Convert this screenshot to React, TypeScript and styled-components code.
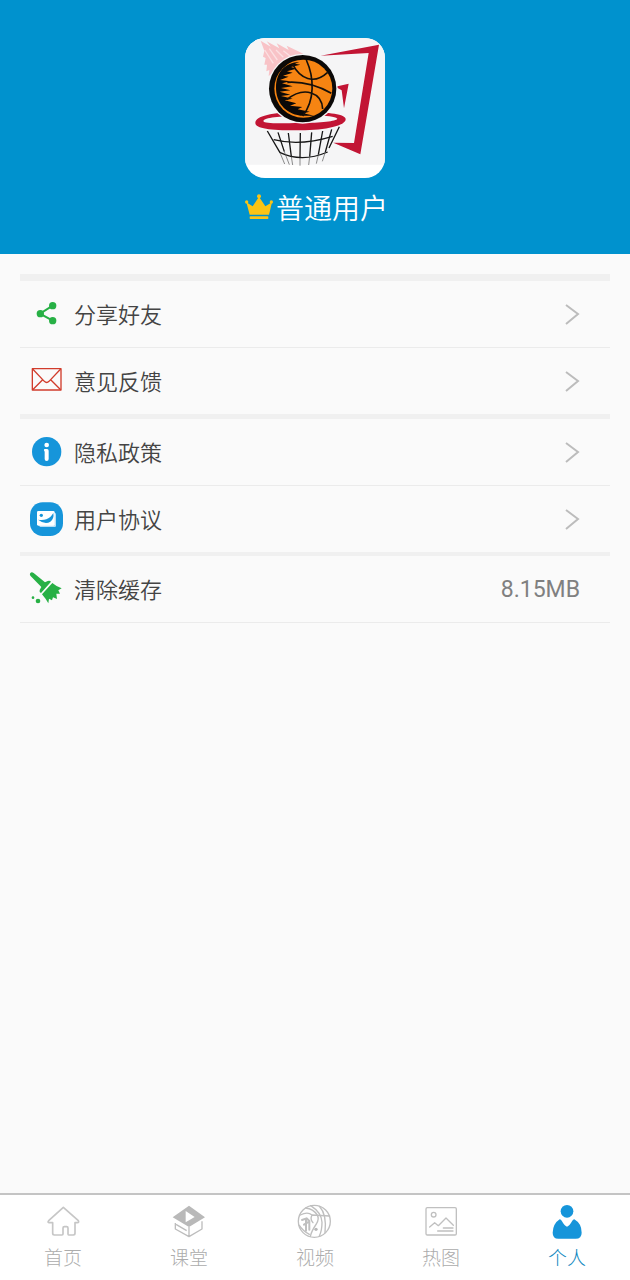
import React from 'react';
import styled, { createGlobalStyle } from 'styled-components';

const GlobalStyle = createGlobalStyle`
  * { box-sizing: border-box; }
  body {
    margin: 0;
    background: #fafafa;
    font-family: Roboto, 'Noto Sans CJK SC', sans-serif;
  }
  button { font-family: inherit; }
`;

const Page = styled.div`
  display: flex;
  flex-direction: column;
  min-height: 100vh;
`;

const Header = styled.header`
  display: flex;
  flex-direction: column;
  align-items: center;
  gap: 12px;
  padding: 38px 20px 24px;
  background: #0092ce;
`;

const Logo = styled.svg`
  width: 140px;
  height: 140px;
  border-radius: 20px;
  background: #ffffff;
`;

const UserName = styled.h1`
  display: flex;
  align-items: flex-start;
  gap: 3px;
  margin: 0;
  padding-left: 3px;
  color: #ffffff;
  font-size: 28px;
  font-weight: 350;
  line-height: 40px;
`;

const Crown = styled.svg`
  width: 28px;
  height: 32px;
`;

const Main = styled.main`
  flex: 1;
  padding: 20px;
`;

const Menu = styled.ul`
  margin: 0;
  padding: 0;
  list-style: none;
  border-top: 7px solid #f0f0f0;
`;

const MenuItem = styled.li<{ $divider: number }>`
  border-bottom: ${(p) => p.$divider}px solid ${(p) => (p.$divider > 1 ? '#f0f0f0' : '#ebebeb')};
`;

const MenuButton = styled.button`
  display: flex;
  align-items: center;
  gap: 10px;
  width: 100%;
  height: 66px;
  padding: 0 30px 0 8px;
  border: 0;
  background: none;
  color: #444444;
  font-size: 22px;
  font-weight: 350;
  line-height: 32px;
  text-align: left;
  cursor: pointer;
`;

const MenuLabel = styled.span`
  flex: 1;
  padding-top: 3px;
`;

const MenuValue = styled.span`
  padding-top: 2px;
  color: #808080;
  font-size: 23px;
  font-weight: 400;
`;

const Icon = styled.svg`
  flex: none;
  width: 36px;
  height: 36px;
`;

const Chevron = styled.svg`
  width: 16px;
  height: 24px;
`;

const TabBar = styled.nav`
  position: sticky;
  bottom: 0;
  display: flex;
  border-top: 2px solid #c4c4c4;
  background: #ffffff;
`;

const Tab = styled.button<{ $active: boolean }>`
  display: flex;
  flex: 1;
  flex-direction: column;
  align-items: center;
  gap: 5px;
  padding: 9px 0 7px;
  border: 0;
  background: none;
  color: ${(p) => (p.$active ? '#1088c0' : '#acacac')};
  font-size: 19px;
  font-weight: 300;
  line-height: 28px;
  cursor: pointer;
`;

const ShareIcon = () => (
  <Icon viewBox="54 93 108 108" aria-hidden="true">
    <path d="M128 122 L90 146 L128 167" fill="none" stroke="#27b045" strokeWidth="6" />
    <circle cx="128" cy="122" r="11" fill="#27b045" />
    <circle cx="91" cy="146" r="11" fill="#27b045" />
    <circle cx="128" cy="167" r="11" fill="#27b045" />
  </Icon>
);

const MailIcon = () => (
  <Icon viewBox="54 294 108 108" aria-hidden="true">
    <g fill="none" stroke="#d13c2c" strokeWidth="4" strokeLinejoin="round">
      <rect x="67" y="311" width="86" height="64" />
      <path d="M68 312 L103 349 Q110 356 117 349 L152 312 M68 374 L98 344 M152 374 L122 344" />
    </g>
  </Icon>
);

const InfoIcon = () => (
  <Icon viewBox="54 72 108 108" aria-hidden="true">
    <circle cx="110" cy="125" r="44" fill="#1695da" />
    <circle cx="110" cy="105" r="7" fill="#fff" />
    <path d="M103 117 H111 Q116 117 116 122 V147 Q116 153 110 153 Q104 153 104 147 V125 Q100 121 103 117Z" fill="#fff" />
  </Icon>
);

const AgreementIcon = () => (
  <Icon viewBox="54 273 108 108" aria-hidden="true">
    <rect x="60" y="277" width="99" height="101" rx="38" fill="#1695da" />
    <rect x="88" y="309" width="50" height="42" rx="4" fill="#b9def5" />
    <rect x="81" y="303" width="53" height="44" rx="4" fill="#fff" />
    <circle cx="94" cy="316" r="5" fill="#1695da" />
    <path d="M84 329 Q98 331 109 328 Q122 323 130 309 Q133 326 121 335 Q105 345 84 329Z" fill="#1695da" />
  </Icon>
);

const BroomIcon = () => (
  <Icon viewBox="54 483 108 108" aria-hidden="true">
    <g fill="#27b045">
      <path d="M61 489 Q65 484 71 489 L105 517 L113 513 Q119 510 123 515 L93 549 Q87 547 89 540 L94 531 L61 497 Q58 493 61 489Z" />
      <path d="M127 519 Q140 530 155 535 L145 541 L150 551 L139 551 L141 567 L129 562 L126 571 L117 566 L115 580 Q108 567 96 553Z" />
      <circle cx="84" cy="573" r="7" />
      <circle cx="69" cy="563" r="4" />
    </g>
  </Icon>
);

const HomeIcon = () => (
  <Icon viewBox="135 57 108 108" aria-hidden="true">
    <path
      d="M190 67 L235 107 Q238 113 232 113 H225 V145 Q225 150 220 150 H206 Q204 150 204 147 V129 Q204 125 200 125 H193 Q189 125 189 129 V147 Q189 150 186 150 H163 Q158 150 158 145 V113 H147 Q142 112 146 107Z"
      fill="none"
      stroke="#c6c6c6"
      strokeWidth="5"
      strokeLinejoin="round"
    />
  </Icon>
);

const ClassIcon = () => (
  <Icon viewBox="513 57 108 108" aria-hidden="true">
    <path d="M567 62 L615 97 L567 126 L518 97Z M557 78 V112 L584 96Z" fill="#b9b9b9" fillRule="evenodd" />
    <path
      d="M606 109 V132 L567 155 V126 M567 155 L526 132 V114 M528 118 L560 137"
      fill="none"
      stroke="#bdbdbd"
      strokeWidth="4"
      strokeLinejoin="round"
    />
  </Icon>
);

const VideoIcon = () => (
  <Icon viewBox="51 57 108 108" aria-hidden="true">
    <g fill="none" stroke="#bfbfbf" strokeWidth="4" strokeLinecap="round">
      <circle cx="103" cy="109" r="48" />
      <path d="M77 69 Q100 72 111 89 Q119 101 109 117 Q94 139 91 154" />
      <path d="M92 62 Q125 83 126 112 Q126 137 118 153 M118 64 Q141 88 135 143" />
      <path d="M61 90 Q83 79 96 90 Q122 91 149 93 M96 90 Q89 103 99 113 M58 121 Q68 137 88 148" />
      <path d="M66 105 L80 100 L88 108 L88 134 M78 104 L78 137 M72 119 L83 112" strokeWidth="6" />
    </g>
    <circle cx="108" cy="133" r="5" fill="#b8b8b8" />
  </Icon>
);

const PictureIcon = () => (
  <Icon viewBox="429 57 108 108" aria-hidden="true">
    <g fill="none" stroke="#c0c0c0" strokeWidth="4" strokeLinejoin="round" strokeLinecap="round">
      <rect x="438" y="68" width="91" height="82" rx="4" />
      <circle cx="461" cy="89" r="7" />
      <path d="M449 126 L464 113 L475 122 L498 99 L520 121 M490 129 H519 M473 138 H519" />
    </g>
  </Icon>
);

const PersonIcon = () => (
  <Icon viewBox="87 57 108 108" aria-hidden="true">
    <g fill="#1695da">
      <circle cx="141" cy="79" r="19" />
      <path d="M119 103 Q123 103 126 109 Q134 124 141 125 Q148 124 156 109 Q159 103 163 103 Q185 116 185 143 Q185 161 167 161 H115 Q98 161 98 143 Q99 116 119 103Z" />
    </g>
  </Icon>
);

const AppLogo = () => (
  <Logo viewBox="15 24 420 420" role="img" aria-label="篮球">
    <path d="M15 24 H435 V404 H15Z" fill="#f5f5f6" />
    <path
      d="M62 32 L92 50 L80 34 L118 55 L110 40 L146 60 L140 47 L190 71 L138 89 L105 124 L86 138 L88 120 L79 124 L81 104 L73 104 L77 84 L69 80 L73 62Z"
      fill="#f8c3c7"
    />
    <path d="M74 60 L100 100 M88 56 L112 90 M108 60 L130 82 M130 62 L150 78" fill="none" stroke="#fbe0e2" strokeWidth="4" />
    <path d="M242 77 L417 44 L361 373 L280 338 L342 339 L386 69Z" fill="#c21534" />
    <path d="M286 170 L326 161 L312 235 L305 181Z" fill="#c21534" />
    <path
      d="M46 279 C46 257 104 246 181 247 C258 246 317 251 317 268 C317 287 259 301 181 301 C103 302 46 297 46 279Z M70 273 C73 282 120 280 181 279 C243 278 289 274 292 266 C281 256 235 257 181 258 C119 258 73 263 70 273Z"
      fill="#c21534"
      fillRule="evenodd"
    />
    <circle cx="188" cy="176" r="105" fill="#f5f5f6" />
    <circle cx="188" cy="176" r="101" fill="#0b0908" />
    <circle cx="190" cy="176" r="87" fill="#f68412" />
    <path
      d="M178 96 C135 97 109 127 108 171 C107 216 135 250 181 257 L222 257 L190 250 L209 245 L173 238 L187 231 L150 227 L169 220 L134 211 L158 206 L123 198 L151 194 L119 185 L151 181 L123 174 L158 169 L126 160 L151 154 L120 150 L146 140 L129 137 L158 128 L141 124 L169 116 L153 111 L181 104 L165 101Z"
      fill="#0b0908"
    />
    <g fill="none" stroke="#15100b" strokeWidth="5">
      <path d="M199 90 C223 143 225 211 188 258" />
      <path d="M157 101 C180 147 222 165 263 127" />
      <path d="M142 157 Q209 153 274 190" />
      <path d="M140 209 C194 166 246 189 248 237" />
    </g>
    <g fill="none" stroke="#171717" strokeWidth="4">
      <path d="M82 303 L120 368 M114 307 L133 365 M145 309 L154 380 M181 309 L180 385 M215 307 L209 380 M248 303 L235 374 M275 298 L256 366 M298 290 L267 354" />
      <path d="M101 329 Q180 349 278 319 M119 367 Q185 399 263 366" />
    </g>
    <path
      d="M120 368 L134 402 M133 365 L148 404 M154 380 L158 405 M180 385 L180 407 M209 380 L206 405 M235 374 L229 401 M256 366 L247 394"
      fill="none"
      stroke="#555555"
      strokeWidth="2"
    />
  </Logo>
);

const menuItems = [
  { label: '分享好友', icon: ShareIcon, divider: 1 },
  { label: '意见反馈', icon: MailIcon, divider: 5 },
  { label: '隐私政策', icon: InfoIcon, divider: 1 },
  { label: '用户协议', icon: AgreementIcon, divider: 4 },
  { label: '清除缓存', icon: BroomIcon, divider: 1, value: '8.15MB' },
];

const tabs = [
  { label: '首页', icon: HomeIcon },
  { label: '课堂', icon: ClassIcon },
  { label: '视频', icon: VideoIcon },
  { label: '热图', icon: PictureIcon },
  { label: '个人', icon: PersonIcon },
];

export default function App() {
  const [active, setActive] = React.useState('个人');

  return (
    <>
      <GlobalStyle />
      <Page>
        <Header>
          <AppLogo />
          <UserName>
            <Crown viewBox="30 30 84 96" aria-hidden="true">
              <g fill="#fbc414">
                <path d="M34 67 L53 79 L72 50 L91 79 L111 67 L102 104 H44Z" />
                <rect x="44" y="109" width="56" height="8" rx="2" />
                <circle cx="72" cy="49" r="6" />
                <circle cx="35" cy="66" r="5" />
                <circle cx="109" cy="66" r="5" />
              </g>
            </Crown>
            普通用户
          </UserName>
        </Header>
        <Main>
          <Menu>
            {menuItems.map(({ label, icon: ItemIcon, divider, value }) => (
              <MenuItem key={label} $divider={divider}>
                <MenuButton type="button">
                  <ItemIcon />
                  <MenuLabel>{label}</MenuLabel>
                  {value ? (
                    <MenuValue>{value}</MenuValue>
                  ) : (
                    <Chevron viewBox="0 0 16 24" aria-hidden="true">
                      <path d="M2 3 L14 12 L2 22" fill="none" stroke="#bcbcbc" strokeWidth="2" />
                    </Chevron>
                  )}
                </MenuButton>
              </MenuItem>
            ))}
          </Menu>
        </Main>
        <TabBar>
          {tabs.map(({ label, icon: TabIcon }) => (
            <Tab
              key={label}
              type="button"
              $active={label === active}
              aria-current={label === active ? 'page' : undefined}
              onClick={() => setActive(label)}
            >
              <TabIcon />
              {label}
            </Tab>
          ))}
        </TabBar>
      </Page>
    </>
  );
}
